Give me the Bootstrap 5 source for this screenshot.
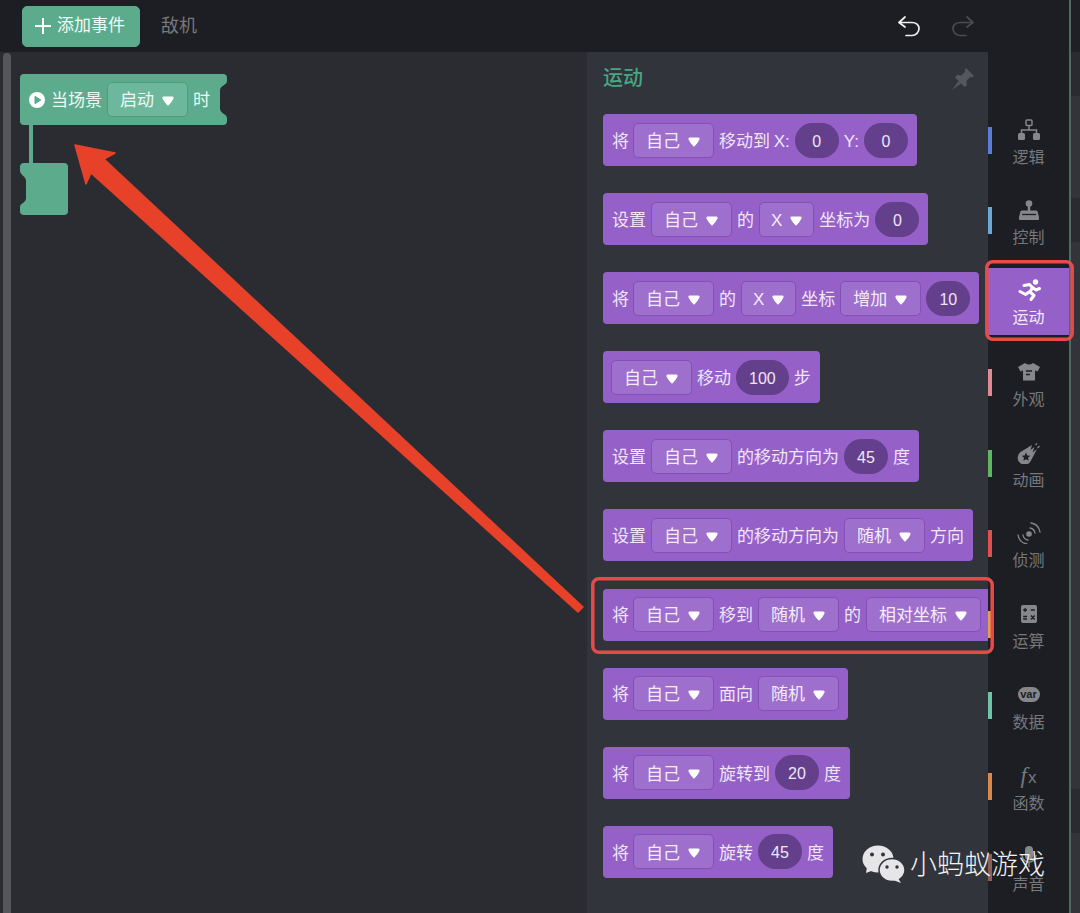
<!DOCTYPE html>
<html lang="zh"><head><meta charset="utf-8"><title>运动</title>
<link href="https://cdn.jsdelivr.net/npm/bootstrap@5.3.0/dist/css/bootstrap.min.css" rel="stylesheet">
<style>
html,body{width:1080px;height:913px;overflow:hidden;margin:0}
body{background:#1d1e23;font-family:"Liberation Sans","Noto Sans CJK SC",sans-serif;font-size:17px;position:relative}
.app-main{width:1069px;flex:none}
.strip-line{width:2px;background:#4f6a60;flex:none}
.strip{width:9px;flex:none}
.strip>div{background:#33343a}
.s-a{height:52px;background:#1f2025!important}.s-b{height:44px;background:#2a2b30!important}
.s-c{height:102px}.s-d{height:547px}.s-e{flex:1}
.topbar{height:52px;background:#1d1e23;padding-left:22px}
.add-btn{width:118px;height:41px;background:#5bab8c;border:1px solid #5bab8c;border-radius:5px;color:#f3faf7;font-size:17px;padding:0 2px 0 0;gap:6px}
.add-btn:hover{background:#5bab8c;color:#f3faf7}
.tab-name{color:#77787c;font-size:18px;margin-left:21px}
.hist{margin-left:auto;margin-right:95px;gap:32px}
.work{height:861px}
.canvas-area{width:587px;background:#2b2c31;position:relative;flex:none}
.scroll-thumb{position:absolute;left:3px;top:1px;bottom:0;width:8px;background:#55565c;border-radius:4px 4px 0 0}
.hat{position:absolute;left:20px;top:22px;width:207px;height:51px;background:#5bab8c;border-radius:4px;padding-left:9px;gap:5px;color:#f0f8f5}
.hat-l{margin-left:1px}
.txt{padding-top:3px}
.notch{position:absolute;top:0}
.stem{position:absolute;left:29px;top:73px;width:4px;height:38px;background:#5bab8c}
.foot{position:absolute;left:20px;top:111px;width:48px;height:52px;background:#5bab8c;border-radius:4px}
.panel{width:401px;background:#31343b;flex:none;overflow:hidden;padding:12px 0 0 16px}
.panel-head{height:50px;margin-right:14px}
.panel-title{color:#4aa582;font-size:20px;font-weight:500;line-height:28px}
.blk{height:52px;background:#9560c8;border-radius:4px;color:#efe6f8;padding:0 9px;gap:5px;margin-bottom:27.1px;flex:none;white-space:nowrap;width:max-content;font-size:17px}
.blk.tight{padding-left:8px}
.blk.cut{border-radius:4px 0 0 4px}
.lead-one{margin-right:-1px}
.tight-word{word-spacing:-1px}
.dd{height:35px;padding:3px 13px 0 12px;gap:8px;background:#9e6fcc;border:1px solid #8350b5;border-radius:5px;color:#f3ecfa}
.dd.short{padding-left:11px;padding-right:11px}
.dd.on-green{background:#6db79c;border-color:#519c80;color:#f0f8f5}
.tri{width:12px;height:10px;flex:none}
.pill{height:35px;min-width:44px;padding:3px 13px 0;background:#643f8c;border-radius:18px;font-size:16px;color:#efe6f8}
.sidebar{width:81px;flex:none;padding-top:47.500px;background:#1d1e23}
.sb-item{height:80.800px;padding:7px 0;position:relative}
.sb-inner{height:67px;padding-top:12px;color:#77787c}
.sb-item.on .sb-inner{background:#9560c8;color:#f3ecfa;padding-top:11px}
.sb-ic{width:26px;height:22px;display:block;flex:none}
.sb-label{font-size:16px;line-height:22px;margin-top:6px}
.accent{position:absolute;left:0;top:27px;width:4px;height:27px}
.overlay{position:absolute;left:0;top:0;pointer-events:none}
.mark-wx{position:absolute;left:862px;top:843px;gap:5px;color:#f4f4f5;font-size:27px;line-height:38px;font-weight:300}
.mark-txt{padding-top:3px}
.fx-txt{font-family:"Liberation Serif",serif;font-style:italic;font-size:23px;line-height:22px;color:#77787c;gap:1px}
.fx-x{font-family:"Liberation Sans",sans-serif;font-size:17px;font-style:normal;padding-top:2px}
.var-txt{display:flex;align-items:center;justify-content:center;width:22px;height:15px;margin-top:3px;border-radius:8px;background:#86878b;color:#1d1e23;font-size:11px;font-weight:700;line-height:15px}
</style></head>
<body>
<svg width="0" height="0" class="position-absolute"><defs>
<symbol id="tri" viewBox="0 0 12 10"><path d="M1.6 0.6H10.4Q12 .6 11.5 2.4Q9.5 6.5 6.6 9.2Q6 9.8 5.4 9.2Q2.5 6.5.5 2.4Q0 .6 1.6.6Z" fill="#fff"/></symbol>
</defs></svg>
<div class="d-flex h-100">
<div class="app-main d-flex flex-column">
 <div class="topbar d-flex align-items-center">
  <button class="btn add-btn d-flex align-items-center justify-content-center">
   <svg width="16" height="16" viewBox="0 0 16 16"><path d="M8 0V16M0 8H16" stroke="#fff" stroke-width="2"/></svg>添加事件</button>
  <span class="tab-name">敌机</span>
  <div class="hist d-flex">
   <svg width="22" height="22" viewBox="0 0 22 22" fill="none" stroke="#f0f0f0" stroke-width="1.7" stroke-linecap="round" stroke-linejoin="round"><path d="M7 2 1 7.500 7 12M1.500 7.500H14C18 7.500 21 10 21 13.500S18 20.500 14 20.500H8"/></svg>
   <svg width="22" height="22" viewBox="0 0 22 22" fill="none" stroke="#4a4b50" stroke-width="1.7" stroke-linecap="round" stroke-linejoin="round"><path d="M15 2 21 7.500 15 12M20.500 7.500H8C4 7.500 1 10 1 13.500S4 20.500 8 20.500H14"/></svg>
  </div>
 </div>
 <div class="work d-flex">
  <div class="canvas-area">
   <div class="scroll-thumb"></div>
   <div class="stem"></div>
   <div class="hat d-flex align-items-center">
    <svg width="16" height="16" viewBox="0 0 16 16"><circle cx="8" cy="8" r="8" fill="#fff"/><path d="M6 4.300 11.800 8 6 11.700Z" fill="#5bab8c" stroke="#5bab8c" stroke-linejoin="round"/></svg>
    <span class="txt hat-l">当场景</span>
    <span class="dd on-green d-flex align-items-center">启动<svg class="tri"><use href="#tri"/></svg></span>
    <span class="txt">时</span>
    <svg class="notch" style="right:0" width="8" height="51" viewBox="0 0 8 51"><path d="M8 7C8 11 2 11 1 16V35C2 40 8 40 8 44Z" fill="#2b2c31"/></svg>
   </div>
   <div class="foot"><svg class="notch" style="left:0" width="8" height="52" viewBox="0 0 8 52"><path d="M0 8C0 12 6 13 6 18V35C6 40 0 40 0 44Z" fill="#2b2c31"/></svg></div>
  </div>
  <div class="panel">
   <div class="panel-head d-flex justify-content-between align-items-start">
    <span class="panel-title">运动</span>
    <svg class="mt-1" width="22" height="22" viewBox="0 0 22 22" fill="#55575c"><path d="M14 0 22 8 20 9.500 18.500 8.800 14.500 12.800 15 17 12.500 19 3 9.500 5 7 9.200 7.500 13.200 3.500 12.500 2Z"/><path d="M6.500 13 0 22 9 15.500Z"/></svg>
   </div>
   <div class="blk d-flex align-items-center"><span class="txt lead-one">将</span><span class="dd d-flex align-items-center">自己<svg class="tri"><use href="#tri"/></svg></span><span class="txt tight-word">移动到 X:</span><span class="pill d-flex align-items-center justify-content-center">0</span><span class="txt">Y:</span><span class="pill d-flex align-items-center justify-content-center">0</span></div>
   <div class="blk d-flex align-items-center"><span class="txt">设置</span><span class="dd d-flex align-items-center">自己<svg class="tri"><use href="#tri"/></svg></span><span class="txt">的</span><span class="dd short d-flex align-items-center">X<svg class="tri"><use href="#tri"/></svg></span><span class="txt">坐标为</span><span class="pill d-flex align-items-center justify-content-center">0</span></div>
   <div class="blk d-flex align-items-center"><span class="txt lead-one">将</span><span class="dd d-flex align-items-center">自己<svg class="tri"><use href="#tri"/></svg></span><span class="txt">的</span><span class="dd short d-flex align-items-center">X<svg class="tri"><use href="#tri"/></svg></span><span class="txt">坐标</span><span class="dd d-flex align-items-center">增加<svg class="tri"><use href="#tri"/></svg></span><span class="pill d-flex align-items-center justify-content-center">10</span></div>
   <div class="blk tight d-flex align-items-center"><span class="dd d-flex align-items-center">自己<svg class="tri"><use href="#tri"/></svg></span><span class="txt">移动</span><span class="pill d-flex align-items-center justify-content-center">100</span><span class="txt">步</span></div>
   <div class="blk d-flex align-items-center"><span class="txt">设置</span><span class="dd d-flex align-items-center">自己<svg class="tri"><use href="#tri"/></svg></span><span class="txt">的移动方向为</span><span class="pill d-flex align-items-center justify-content-center">45</span><span class="txt">度</span></div>
   <div class="blk d-flex align-items-center"><span class="txt">设置</span><span class="dd d-flex align-items-center">自己<svg class="tri"><use href="#tri"/></svg></span><span class="txt">的移动方向为</span><span class="dd d-flex align-items-center">随机<svg class="tri"><use href="#tri"/></svg></span><span class="txt">方向</span></div>
   <div class="blk cut d-flex align-items-center"><span class="txt lead-one">将</span><span class="dd d-flex align-items-center">自己<svg class="tri"><use href="#tri"/></svg></span><span class="txt">移到</span><span class="dd d-flex align-items-center">随机<svg class="tri"><use href="#tri"/></svg></span><span class="txt">的</span><span class="dd d-flex align-items-center">相对坐标<svg class="tri"><use href="#tri"/></svg></span></div>
   <div class="blk d-flex align-items-center"><span class="txt lead-one">将</span><span class="dd d-flex align-items-center">自己<svg class="tri"><use href="#tri"/></svg></span><span class="txt">面向</span><span class="dd d-flex align-items-center">随机<svg class="tri"><use href="#tri"/></svg></span></div>
   <div class="blk d-flex align-items-center"><span class="txt lead-one">将</span><span class="dd d-flex align-items-center">自己<svg class="tri"><use href="#tri"/></svg></span><span class="txt">旋转到</span><span class="pill d-flex align-items-center justify-content-center">20</span><span class="txt">度</span></div>
   <div class="blk d-flex align-items-center"><span class="txt lead-one">将</span><span class="dd d-flex align-items-center">自己<svg class="tri"><use href="#tri"/></svg></span><span class="txt">旋转</span><span class="pill d-flex align-items-center justify-content-center">45</span><span class="txt">度</span></div>
  </div>
  <div class="sidebar d-flex flex-column">
   <div class="sb-item"><i class="accent" style="background:#5b7fd6"></i><div class="sb-inner d-flex flex-column align-items-center">
    <svg class="sb-ic" viewBox="0 0 26 22"><rect x="10" y="1" width="6" height="5.500" rx="1" fill="none" stroke="#86878b" stroke-width="1.500"/><path d="M13 6.500V11M5.500 15V11H20.500V15" fill="none" stroke="#86878b" stroke-width="1.500"/><rect x="2" y="14" width="7" height="7" rx="1.500" fill="#86878b"/><rect x="17" y="14" width="7" height="7" rx="1.500" fill="#86878b"/></svg>
    <span class="sb-label">逻辑</span></div></div>
   <div class="sb-item"><i class="accent" style="background:#6fa8d6"></i><div class="sb-inner d-flex flex-column align-items-center">
    <svg class="sb-ic" viewBox="0 0 26 22" fill="#86878b"><circle cx="13" cy="4.500" r="3.300"/><rect x="11.800" y="6" width="2.400" height="6"/><path d="M6 11.500H20Q21 11.500 21.500 12.500L23 18V20Q23 21 22 21H4Q3 21 3 20V18L4.500 12.500Q5 11.500 6 11.500Z"/><path d="M6 15.500H20" stroke="#1d1e23" stroke-width="1.300"/></svg>
    <span class="sb-label">控制</span></div></div>
   <div class="sb-item on"><div class="sb-inner d-flex flex-column align-items-center">
    <svg class="sb-ic" viewBox="0 0 26 22" fill="none" stroke="#fff" stroke-width="3" stroke-linecap="round" stroke-linejoin="round"><circle cx="19.500" cy="3" r="2.700" fill="#fff" stroke="none"/><path d="M8 6.500 13.500 5.500 16.500 8.500 14 13 18 16.500 15 20.500"/><path d="M16.500 8.500 20 11 23.500 9.500"/><path d="M13 13 9.500 15.500 4 12.500"/></svg>
    <span class="sb-label">运动</span></div></div>
   <div class="sb-item"><i class="accent" style="background:#e08a94"></i><div class="sb-inner d-flex flex-column align-items-center">
    <svg class="sb-ic" viewBox="0 0 26 22"><path d="M9 2 2 6 4.500 10.500 7 9.500V19.500H19V9.500L21.500 10.500 24 6 17 2Q13 5 9 2Z" fill="#86878b"/><path d="M10 10H16M10 13.500H14" stroke="#1d1e23" stroke-width="1.300"/></svg>
    <span class="sb-label">外观</span></div></div>
   <div class="sb-item"><i class="accent" style="background:#5fb85f"></i><div class="sb-inner d-flex flex-column align-items-center">
    <svg class="sb-ic" viewBox="0 0 26 22"><path d="M16 3 4.500 10A7 7 0 1 0 15 18.500L21 7 16.500 10.500 18.500 5 14.500 8Z" fill="#86878b"/><path d="M10 10.500 11.300 13.500 14.300 13.800 12 15.800 12.700 18.800 10 17.200 7.300 18.800 8 15.800 5.700 13.800 8.700 13.500Z" fill="#1d1e23"/><path d="M21 1.500 19.500 3M23.500 4 21.500 6" stroke="#86878b" stroke-width="1.200"/></svg>
    <span class="sb-label">动画</span></div></div>
   <div class="sb-item"><i class="accent" style="background:#e0504f"></i><div class="sb-inner d-flex flex-column align-items-center">
    <svg class="sb-ic" viewBox="0 0 26 22" fill="none" stroke="#86878b" stroke-width="1.300" stroke-linecap="round"><circle cx="13" cy="12" r="2.800" fill="#86878b" stroke="none"/><path d="M14 6A6 6 0 0 1 19 11M15 1A11 11 0 0 1 24 10"/><path d="M12 18A6 6 0 0 1 7 13M11 22A11 11 0 0 1 2 13"/></svg>
    <span class="sb-label">侦测</span></div></div>
   <div class="sb-item"><i class="accent" style="background:#e0a050"></i><div class="sb-inner d-flex flex-column align-items-center">
    <svg class="sb-ic" viewBox="0 0 26 22"><rect x="5" y="2" width="16" height="18" rx="2" fill="#86878b"/><path d="M7.200 7H11M9.100 5V9M14.800 7H18.800M7.200 13.500H11M7.200 16H11M15 12.500 18.700 16.500M18.700 12.500 15 16.500" stroke="#1d1e23" stroke-width="1.300"/></svg>
    <span class="sb-label">运算</span></div></div>
   <div class="sb-item"><i class="accent" style="background:#6fc4a8"></i><div class="sb-inner d-flex flex-column align-items-center">
    <span class="sb-ic d-flex justify-content-center"><span class="var-txt">var</span></span>
    <span class="sb-label">数据</span></div></div>
   <div class="sb-item"><i class="accent" style="background:#d98a4a"></i><div class="sb-inner d-flex flex-column align-items-center">
    <span class="sb-ic d-flex justify-content-center fx-txt"><span>f</span><span class="fx-x">x</span></span>
    <span class="sb-label">函数</span></div></div>
   <div class="sb-item"><i class="accent" style="background:#8a5f55"></i><div class="sb-inner d-flex flex-column align-items-center">
    <svg class="sb-ic" viewBox="0 0 26 22"><rect x="9" y="0" width="8" height="14" rx="4" fill="#86878b"/><path d="M6 9A7 7 0 0 0 20 9M13 16V21" fill="none" stroke="#86878b" stroke-width="1.500"/></svg>
    <span class="sb-label">声音</span></div></div>
  </div>
 </div>
</div>
<div class="strip-line"></div>
<div class="strip d-flex flex-column"><div class="s-a"></div><div class="s-b"></div><div class="s-c"></div><div class="s-b"></div><div class="s-d"></div><div class="s-b"></div><div class="s-e"></div></div>
</div>
<svg class="overlay" width="1080" height="913" viewBox="0 0 1080 913">
 <path d="M75 145 115 153 104 159 583 607 578 612 91 173 86 184Z" fill="#e8412a" stroke="#e8412a" stroke-width="1.500" stroke-linejoin="round"/>
 <rect x="592.800" y="578.800" width="399.400" height="73.400" rx="6" fill="none" stroke="#e84a4a" stroke-width="3.500"/>
 <rect x="986.800" y="261.800" width="85.400" height="77.400" rx="6" fill="none" stroke="#e84a4a" stroke-width="3.500"/>
</svg>
<div class="mark-wx d-flex align-items-center">
 <svg width="43" height="38" viewBox="0 0 43 38"><ellipse cx="16" cy="14" rx="15.500" ry="13.500" fill="#e6e6e8"/><path d="M5 22 4 28 12 25Z" fill="#e6e6e8"/><ellipse cx="30" cy="25" rx="13" ry="11.500" fill="#e6e6e8" stroke="#31343b" stroke-width="1.500"/><path d="M36 33 39 38 31 35Z" fill="#e6e6e8"/><circle cx="10" cy="9.500" r="2" fill="#31343b"/><circle cx="21" cy="9.500" r="2" fill="#31343b"/><circle cx="25" cy="22" r="1.700" fill="#31343b"/><circle cx="35" cy="22" r="1.700" fill="#31343b"/></svg>
 <span class="mark-txt">小蚂蚁游戏</span>
</div>
</body></html>
